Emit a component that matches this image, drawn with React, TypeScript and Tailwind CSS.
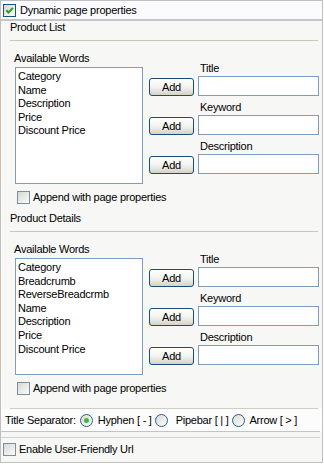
import React from "react";

function Check({ checked = false, dark = false }: { checked?: boolean; dark?: boolean }) {
  return (
    <span
      className={`flex h-[13px] w-[13px] shrink-0 items-center justify-center border ${
        dark ? "border-[#1c5180]" : "border-[#7b8ea4]"
      } bg-linear-to-br from-[#d8d8d2] to-[#fbfbfb]`}
    >
      {checked && (
        <svg width="11" height="11" viewBox="0 0 11 11">
          <path d="M2.3 5.2 L4.5 7.5 L8.9 2.9" fill="none" stroke="#21a121" strokeWidth="2" />
        </svg>
      )}
    </span>
  );
}

function Radio({ checked = false }: { checked?: boolean }) {
  return (
    <span className="flex h-[13px] w-[13px] shrink-0 items-center justify-center rounded-full border border-[#2c5e8e] bg-linear-to-br from-[#d8d8d2] to-white">
      {checked && <span className="h-[5px] w-[5px] rounded-full bg-[#3dba3d]" />}
    </span>
  );
}

function Field({ label }: { label: string }) {
  return (
    <div className="flex items-end">
      <button className="flex h-[18px] w-[45px] items-center justify-center rounded-[3px] border border-[#1d4a78] bg-linear-to-b from-white via-[#f3f3ef] to-[#d6d2c6] text-[11px] leading-none text-black">
        Add
      </button>
      <div className="ml-[4px] flex flex-col">
        <span className="h-[13px] pl-[2px] leading-[13px]">{label}</span>
        <div className="mt-[1px] h-[20px] w-[121px] border border-[#7f9db9] bg-white" />
      </div>
    </div>
  );
}

function Section({ title, words, first }: { title: string; words: string[]; first?: boolean }) {
  return (
    <>
      <div
        className={`${first ? "" : "mt-[7px]"} ml-[9px] mr-[4px] border-b border-[#cbc7b4] pb-[6px] leading-[13px]`}
      >
        {title}
      </div>
      <div className="flex pl-[13px]">
        <div className="mt-[11px] flex flex-col">
          <span className="leading-[13px]">Available Words</span>
          <div className="ml-[1px] mt-[2px] h-[117px] w-[128px] border border-[#7f9db9] bg-white pl-[2px] pt-[2px]">
            {words.map((w) => (
              <div key={w} className="whitespace-nowrap leading-[13.6px]">
                {w}
              </div>
            ))}
          </div>
        </div>
        <div className="ml-[6px] mt-[21px] flex flex-col gap-[5px]">
          <Field label="Title" />
          <Field label="Keyword" />
          <Field label="Description" />
        </div>
      </div>
      <div className="mt-[6px] flex h-[15px] items-center pl-[16px]">
        <Check />
        <span className="ml-[3px] leading-[13px]">Append with page properties</span>
      </div>
    </>
  );
}

export default function App() {
  return (
    <div className="h-[464px] w-[324px] bg-white">
      <div className="flex h-[463px] w-[323px] flex-col border border-[#c0c0c0] bg-[#f7f7f5] font-['Liberation_Sans',Arial,sans-serif] text-[11px] tracking-[-0.25px] text-black">
        <div className="flex h-[18px] items-center bg-[#fbfbfd] pl-[2px]">
          <Check checked dark />
          <span className="ml-[4px]">Dynamic page properties</span>
        </div>
        <div className="h-[2px] bg-[#c6c6c6]" />
        <Section first title="Product List" words={["Category", "Name", "Description", "Price", "Discount Price"]} />
        <Section
          title="Product Details"
          words={["Category", "Breadcrumb", "ReverseBreadcrmb", "Name", "Description", "Price", "Discount Price"]}
        />
        <div className="ml-[9px] mr-[4px] mt-[12px] h-px bg-[#cfcdc4]" />
        <div className="flex h-[22px] items-center bg-[#fcfcfc] pl-[4px]">
          <span>Title Separator:</span>
          <span className="ml-[4px]">
            <Radio checked />
          </span>
          <span className="ml-[5px]">Hyphen [ - ]</span>
          <span className="ml-[3px]">
            <Radio />
          </span>
          <span className="ml-[8px]">Pipebar [ | ]</span>
          <span className="ml-[4px]">
            <Radio />
          </span>
          <span className="ml-[4px]">Arrow [ &gt; ]</span>
        </div>
        <div className="mr-[2px] h-px bg-[#c4c4c0]" />
        <div className="mr-[2px] mt-[5px] h-px bg-[#d2d2cc]" />
        <div className="mt-[4px] flex h-[15px] items-center pl-[2px]">
          <Check />
          <span className="ml-[3px]">Enable User-Friendly Url</span>
        </div>
      </div>
    </div>
  );
}
